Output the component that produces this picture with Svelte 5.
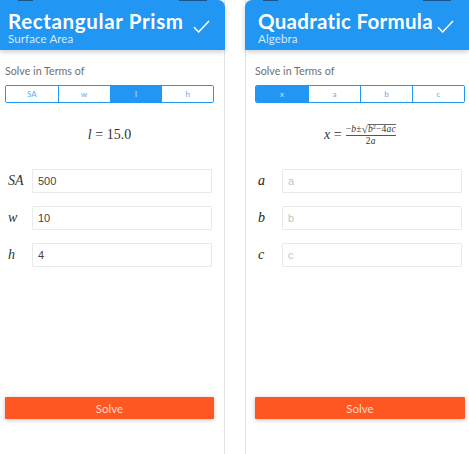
<script>
  const panels = [
    {
      id: 'left', title: 'Rectangular Prism', subtitle: 'Surface Area',
      options: ['SA', 'w', 'l', 'h'], selected: 2,
      rows: [
        { label: 'SA', value: '500', hint: 'SA' },
        { label: 'w', value: '10', hint: 'w' },
        { label: 'h', value: '4', hint: 'h' }
      ]
    },
    {
      id: 'right', title: 'Quadratic Formula', subtitle: 'Algebra',
      options: ['x', 'a', 'b', 'c'], selected: 0,
      rows: [
        { label: 'a', value: '', hint: 'a' },
        { label: 'b', value: '', hint: 'b' },
        { label: 'c', value: '', hint: 'c' }
      ]
    }
  ];
</script>

<div class="screen">
  {#each panels as p}
    <section class="panel {p.id}">
      <header>
        <div class="status"><i class="s1"></i><i class="s2"></i></div>
        <div class="head-row">
          <div class="titles">
            <h1>{p.title}</h1>
            <p>{p.subtitle}</p>
          </div>
          <svg class="tick" width="17" height="13" viewBox="0 0 17 13" fill="none">
            <path d="M1 7.2 L5.6 12 L16 1" stroke="#fff" stroke-width="1.5" />
          </svg>
        </div>
      </header>
      <div class="body">
        <div class="lead">Solve in Terms of</div>
        <div class="seg">
          {#each p.options as o, i}
            <button class:on={i === p.selected}>{o}</button>
          {/each}
        </div>
        <div class="formula">
          {#if p.id === 'left'}
            <span><em>l</em> = 15.0</span>
          {:else}
            <span class="eq"><em>x</em> =</span>
            <span class="frac">
              <span class="num"><span>−<em>b</em>±</span><span class="rad">√</span><span class="under"><em>b</em><sup>2</sup>−4<em>ac</em></span></span>
              <span class="den">2<em>a</em></span>
            </span>
          {/if}
        </div>
        <div class="rows">
          {#each p.rows as r}
            <label class="row">
              <em class="var">{r.label}</em>
              <input value={r.value} placeholder={r.hint} />
            </label>
          {/each}
        </div>
        <button class="solve">Solve</button>
      </div>
    </section>
  {/each}
</div>

<style>
  :global(body) { margin: 0; background: #fff; }
  .screen {
    width: 469px; height: 454px; overflow: hidden;
    display: flex; justify-content: space-between;
    font-family: Lato, "Noto Sans", sans-serif;
    background: #fff;
  }
  .panel { height: 454px; display: flex; flex-direction: column; box-sizing: border-box; }
  .left { width: 225px; border-right: 1px solid #e2e2e2; }
  .right { width: 224px; border-left: 1px solid #e2e2e2; }
  header {
    height: 50px; flex: none; background: #2196f3; color: #fff;
    box-shadow: 0 2px 5px rgba(0,0,0,.2);
    position: relative; z-index: 1;
    box-sizing: border-box;
  }
  .left header { border-top-right-radius: 7px; margin-right: -1px; }
  .right header { border-top-left-radius: 7px; margin-left: -1px; }
  .status { height: 9px; display: flex; justify-content: space-between; align-items: flex-start; padding: 0 18px; }
  .status i { height: 1px; background: rgba(20,40,70,.6); display: block; }
  .s1 { width: 15px; }
  .s2 { width: 28px; }
  .head-row { display: flex; align-items: flex-start; justify-content: space-between; padding-right: 15px; }
  .left .head-row { padding-left: 8px; }
  .right .head-row { padding-left: 13px; }
  .titles { min-width: 0; }
  h1 { margin: 0; font-size: 20.5px; line-height: 24px; font-weight: 700; white-space: nowrap; }
  .left h1 { letter-spacing: 0.65px; }
  .right h1 { letter-spacing: 0.3px; }
  .titles p { margin: -1px 0 0; font-size: 11.5px; line-height: 14px; color: #d6eafc; letter-spacing: 0.12px; }
  .tick { margin-top: 11px; }
  .body { flex: 1; display: flex; flex-direction: column; min-height: 0; padding-bottom: 35px; box-sizing: border-box; }
  .left .body { padding-left: 5px; padding-right: 10px; }
  .right .body { padding-left: 9px; padding-right: 4px; }
  .lead { margin-top: 14px; font-size: 10.7px; line-height: 14px; color: #6f6f6f; }
  .seg {
    margin-top: 7px; height: 18px; box-sizing: border-box;
    display: grid; grid-template-columns: repeat(4, 1fr);
    border: 1px solid #2196f3; border-radius: 2px; overflow: hidden;
  }
  .seg button {
    border: 0; border-left: 1px solid #2196f3; background: #fff; padding: 0;
    font: 8px Lato, sans-serif; color: #5aaef5;
  }
  .seg button:first-child { border-left: 0; }
  .seg button.on { background: #2196f3; color: #cfe6fb; }
  .formula {
    height: 66px; padding-bottom: 2px; box-sizing: border-box;
    display: flex; align-items: center; justify-content: center; gap: 4px;
    font-family: "Liberation Serif", serif; font-size: 14px; color: #333;
  }
  .frac { display: inline-flex; flex-direction: column; align-items: center; font-size: 9.5px; line-height: 9px; letter-spacing: 0.2px; }
  .num { display: flex; border-bottom: 1px solid #555; align-items: flex-end; padding-bottom: 1px; }
  .rad { font-size: 11px; line-height: 9px; }
  .under { border-top: 1px solid #666; }
  sup { font-size: 6px; line-height: 0; vertical-align: 3px; }
  .den { padding-top: 1px; }
  .rows { display: flex; flex-direction: column; gap: 13px; }
  .row { display: flex; align-items: center; height: 24px; }
  .var { font-family: "Liberation Serif", serif; font-size: 14px; color: #333; box-sizing: border-box; flex: none; }
  .left .var { width: 27px; padding-left: 3px; }
  .right .var { width: 27px; padding-left: 3px; font-size: 14px; color: #222; }
  input {
    width: 180px; height: 24px; box-sizing: border-box;
    border: 1px solid #eaeaea; border-radius: 1px; padding: 0 5px;
    font: 11px "Liberation Sans", sans-serif; color: #444; background: #fff; outline: 0;
  }
  input::placeholder { color: #c4c4c4; }
  .solve {
    margin-top: auto; height: 22px; border: 0; border-radius: 1px; flex: none;
    background: #ff5722; color: #ffd9cc; font: 11.5px Lato, sans-serif;
    box-shadow: 0 1px 4px rgba(0,0,0,.25);
  }
</style>
